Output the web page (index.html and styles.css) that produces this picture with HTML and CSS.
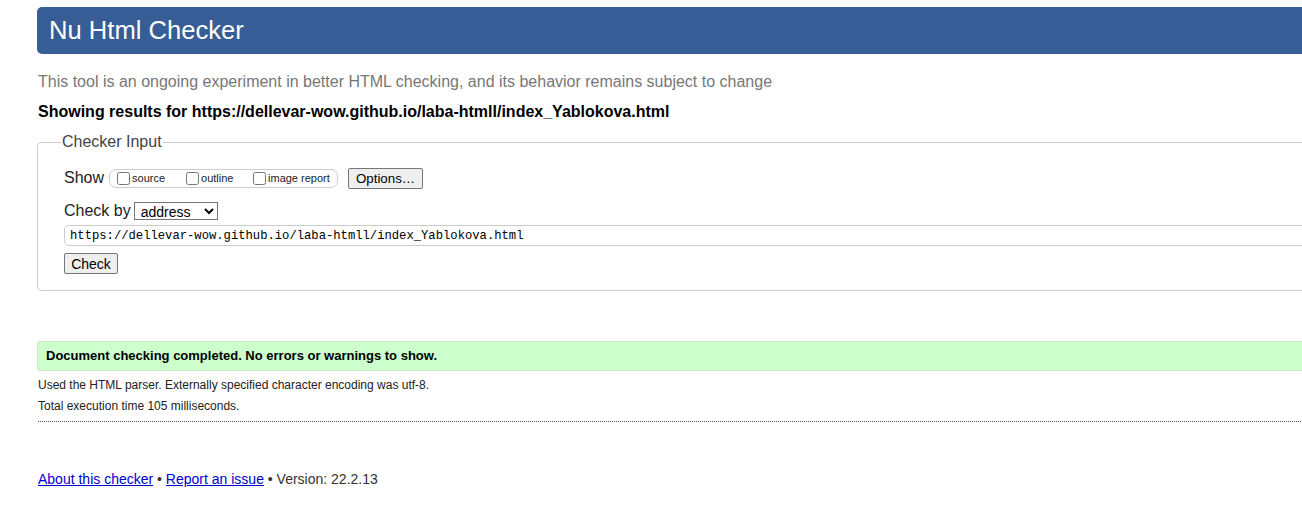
FILE: index.html
```html
<!DOCTYPE html>
<html>
<head>
<meta charset="utf-8">
<title>Showing results for https://dellevar-wow.github.io/laba-htmll/index_Yablokova.html - Nu Html Checker</title>
<link rel="stylesheet" href="styles.css">
</head>
<body>
<div class="page">
  <h1 class="header">Nu Html Checker</h1>
  <p class="tagline">This tool is an ongoing experiment in better HTML checking, and its behavior remains subject to change</p>
  <p class="showing">Showing results for https://dellevar-wow.github.io/laba-htmll/index_Yablokova.html</p>
  <fieldset class="input">
    <legend class="legend">Checker Input</legend>
    <div class="row show-row">
      <span class="label">Show</span>
      <span class="show-box">
        <label class="opt opt-source"><input type="checkbox" class="cb">source</label>
        <label class="opt opt-outline"><input type="checkbox" class="cb">outline</label>
        <label class="opt"><input type="checkbox" class="cb">image report</label>
      </span>
      <button class="btn btn-options" type="button">Options…</button>
    </div>
    <div class="row by-row">
      <span class="label">Check by</span>
      <select class="sel"><option>address</option></select>
    </div>
    <input class="url" type="text" value="https://dellevar-wow.github.io/laba-htmll/index_Yablokova.html">
    <div class="row check-row">
      <button class="btn btn-check" type="button">Check</button>
    </div>
  </fieldset>
  <div class="success">Document checking completed. No errors or warnings to show.</div>
  <p class="details">Used the HTML parser. Externally specified character encoding was utf-8.</p>
  <p class="details details-last">Total execution time 105 milliseconds.</p>
  <p class="footer"><a href="#">About this checker</a> • <a href="#">Report an issue</a> • Version: 22.2.13</p>
</div>
</body>
</html>
```
FILE: styles.css
```css
html, body {
  margin: 0;
  padding: 0;
  overflow: hidden;
  background: #fff;
}
body {
  font-family: "Liberation Sans", Arial, sans-serif;
  color: #000;
}
.page {
  padding-left: 37px;
  width: 1300px;
}
.header {
  margin: 7px 0 0 0;
  height: 47px;
  line-height: 46px;
  background: #365d95;
  color: #fff;
  font-weight: normal;
  font-size: 25.6px;
  padding-left: 12px;
  border-radius: 5px 0 0 5px;
}
.tagline {
  margin: 18px 0 0 1px;
  font-size: 16px;
  line-height: 20px;
  color: #777;
}
.showing {
  margin: 10px 0 0 1px;
  font-size: 16px;
  line-height: 20px;
  font-weight: bold;
}
.input {
  margin: 11px 0 0 0;
  padding: 16px 0 16px 26px;
  border: 1px solid #ccc;
  border-radius: 4px;
}
.legend {
  font-size: 16px;
  color: #444;
  padding: 0 1px;
  margin-left: -3px;
}
.row {
  display: flex;
  align-items: center;
}
.label {
  font-size: 16px;
  color: #222;
}
.show-row {
  height: 22px;
}
.show-box {
  display: inline-flex;
  align-items: center;
  margin-left: 5px;
  height: 17px;
  padding: 0 7px 0 7px;
  border: 1px solid #ccc;
  border-radius: 7px;
  width: 213px;
}
.opt {
  display: inline-flex;
  align-items: center;
  font-size: 11px;
  color: #222;
}
.opt-source { width: 69px; }
.opt-outline { width: 67px; }
.cb {
  margin: 0 2px 0 0;
  width: 13px;
  height: 13px;
}
.btn {
  font-family: "Liberation Sans", Arial, sans-serif;
  background: #efefef;
  border: 1px solid #767676;
  border-radius: 2px;
  color: #000;
  padding: 0 6px;
}
.btn-options {
  margin-left: 10px;
  height: 21px;
  font-size: 13.3px;
  width: 75px;
}
.by-row {
  margin-top: 12px;
  height: 20px;
}
.sel {
  margin-left: 3px;
  width: 84px;
  height: 18px;
  font-family: "Liberation Sans", Arial, sans-serif;
  font-size: 14px;
  border: 1px solid #767676;
  border-radius: 0;
  background: #fff;
  padding: 0 2px;
}
.url {
  display: block;
  box-sizing: border-box;
  margin-top: 4px;
  width: 1300px;
  height: 21px;
  font-family: "Liberation Mono", "Courier New", monospace;
  font-size: 12.2px;
  border: 1px solid #ccc;
  border-radius: 5px;
  padding: 0 5px;
  color: #000;
}
.check-row {
  margin-top: 7px;
}
.btn-check {
  height: 21px;
  width: 54px;
  font-size: 14px;
}
.success {
  margin-top: 50px;
  height: 28px;
  line-height: 28px;
  background: #ccffcc;
  border: 1px solid #c9e6c9;
  border-radius: 3px 0 0 3px;
  padding-left: 8px;
  font-size: 13px;
  font-weight: bold;
}
.details {
  margin: 6px 0 0 1px;
  font-size: 12px;
  line-height: 16px;
  color: #222;
}
.details + .details {
  margin-top: 5px;
}
.details-last {
  padding-bottom: 7px;
  border-bottom: 1px dotted #555;
}
.footer {
  margin: 49px 0 0 1px;
  font-size: 14px;
  color: #333;
}
.footer a {
  color: #00c;
}
```
